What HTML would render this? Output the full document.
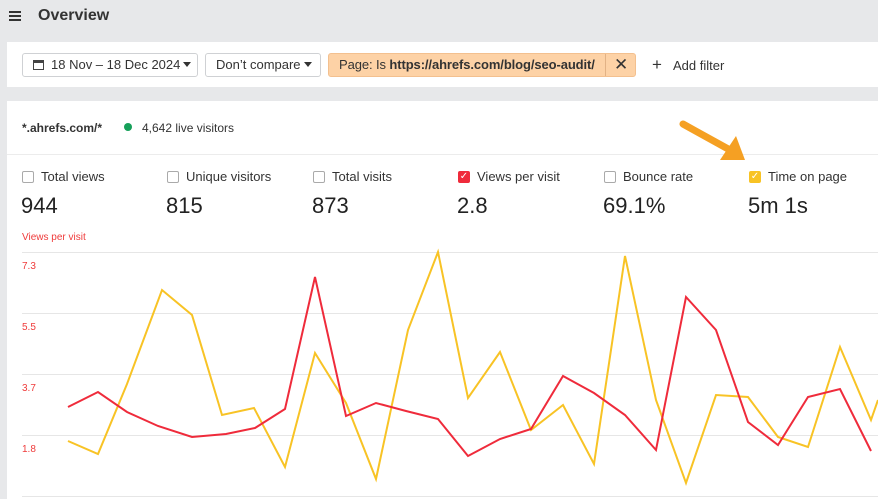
<!DOCTYPE html>
<html><head><meta charset="utf-8"><style>
*{margin:0;padding:0;box-sizing:border-box}
body{width:878px;height:499px;overflow:hidden;background:#e7e8ea;font-family:"Liberation Sans",Arial,sans-serif;color:#333;position:relative}
.abs{position:absolute}
.btn{position:absolute;top:53px;height:24px;border:1px solid #cfd1d4;border-radius:3px;background:#fff;font-size:13px;line-height:22px;padding-left:10px;color:#333;white-space:nowrap}
.cb{position:absolute;top:171px;width:12px;height:12px;border:1px solid #aaa;border-radius:2px;background:#fff}
.lbl{position:absolute;top:169px;font-size:13px;color:#333}
.val{position:absolute;top:193px;font-size:22px;color:#222}
.ax{position:absolute;left:22px;font-size:10px;color:#ef3b3b}
.tri{display:inline-block;width:0;height:0;border-left:4px solid transparent;border-right:4px solid transparent;border-top:5px solid #333;vertical-align:2px;margin-left:3px}
</style></head><body>
<div class="abs" style="left:9px;top:11px;width:12px;height:2px;background:#333;box-shadow:0 4px 0 #333,0 8px 0 #333"></div>
<div class="abs" style="left:38px;top:7px;font-size:16px;font-weight:bold;color:#333">Overview</div>
<div class="abs" style="left:7px;top:42px;width:871px;height:45px;background:#fff"></div>
<div class="btn" style="left:22px;width:176px">
<span style="display:inline-block;width:11px;height:10px;border:1.5px solid #444;border-top-width:3px;vertical-align:-1px;margin-right:7px"></span>18 Nov – 18 Dec 2024<span class="tri"></span></div>
<div class="btn" style="left:205px;width:116px">Don’t compare<span class="tri"></span></div>
<div class="btn" style="left:328px;width:308px;background:#fdd2a6;border-color:#f3c08f;letter-spacing:-0.1px">Page: Is <b>https://ahrefs.com/blog/seo-audit/</b>
<span class="abs" style="left:276px;top:0;width:1px;height:22px;background:#e2b285"></span>
<span class="abs" style="left:285px;top:0;font-size:17px">✕</span></div>
<div class="abs" style="left:652px;top:55px;font-size:17px;color:#333">+</div>
<div class="abs" style="left:673px;top:58px;font-size:13px;color:#333">Add filter</div>
<div class="abs" style="left:7px;top:101px;width:871px;height:398px;background:#fff"></div>
<div class="abs" style="left:22px;top:121px;font-size:12px;font-weight:bold;color:#333">*.ahrefs.com/*</div>
<div class="abs" style="left:124px;top:123px;width:8px;height:8px;border-radius:50%;background:#16a05a"></div>
<div class="abs" style="left:142px;top:121px;font-size:12px;color:#333">4,642 live visitors</div>
<div class="abs" style="left:7px;top:154px;width:871px;height:1px;background:#ececec"></div>
<div class="cb" style="left:22px"></div><div class="lbl" style="left:41px">Total views</div><div class="val" style="left:21px">944</div>
<div class="cb" style="left:167px"></div><div class="lbl" style="left:186px">Unique visitors</div><div class="val" style="left:166px">815</div>
<div class="cb" style="left:313px"></div><div class="lbl" style="left:332px">Total visits</div><div class="val" style="left:312px">873</div>
<div class="cb" style="left:458px;background:#ef2b3b;border-color:#ef2b3b;color:#fff;font-size:10px;line-height:10px;text-align:center">✓</div><div class="lbl" style="left:477px">Views per visit</div><div class="val" style="left:457px">2.8</div>
<div class="cb" style="left:604px"></div><div class="lbl" style="left:623px">Bounce rate</div><div class="val" style="left:603px">69.1%</div>
<div class="cb" style="left:749px;background:#f8c325;border-color:#f8c325;color:#fff;font-size:10px;line-height:10px;text-align:center">✓</div><div class="lbl" style="left:768px">Time on page</div><div class="val" style="left:748px">5m 1s</div>
<div class="ax" style="top:232px">Views per visit</div>
<div class="ax" style="top:261px">7.3</div>
<div class="ax" style="top:322px">5.5</div>
<div class="ax" style="top:383px">3.7</div>
<div class="ax" style="top:444px">1.8</div>
<svg class="abs" style="left:0;top:0" width="878" height="499">
<g stroke="#e6e6e6" stroke-width="1">
<line x1="22" y1="252.5" x2="878" y2="252.5"/><line x1="22" y1="313.5" x2="878" y2="313.5"/><line x1="22" y1="374.5" x2="878" y2="374.5"/><line x1="22" y1="435.5" x2="878" y2="435.5"/><line x1="22" y1="496.5" x2="878" y2="496.5"/></g>
<polyline fill="none" stroke="#f8c325" stroke-width="2" points="68,441 98,454 127,384 162,290 192,315 222,415 254,408 285,467 315,353 346,403 376,479 408,330 438,252 468,398 500,352 531,430 563,405 594,464 625,256 656,400 686,483 716,395 748,397 778,437 808,447 840,347 871,420 878,400"/>
<polyline fill="none" stroke="#ef2b3b" stroke-width="2" points="68,407 98,392 127,412 158,426 192,437 226,434 255,428 285,409 315,277 346,416 376,403 406,411 438,419 468,456 500,439 531,429 563,376 594,393 625,415 656,450 686,297 716,330 748,422 778,445 808,397 840,389 871,451"/>
<line x1="683" y1="124" x2="730" y2="150" stroke="#f5a023" stroke-width="7" stroke-linecap="round"/>
<polygon points="745,160 720,160 736,136" fill="#f5a023"/>
</svg>
</body></html>
